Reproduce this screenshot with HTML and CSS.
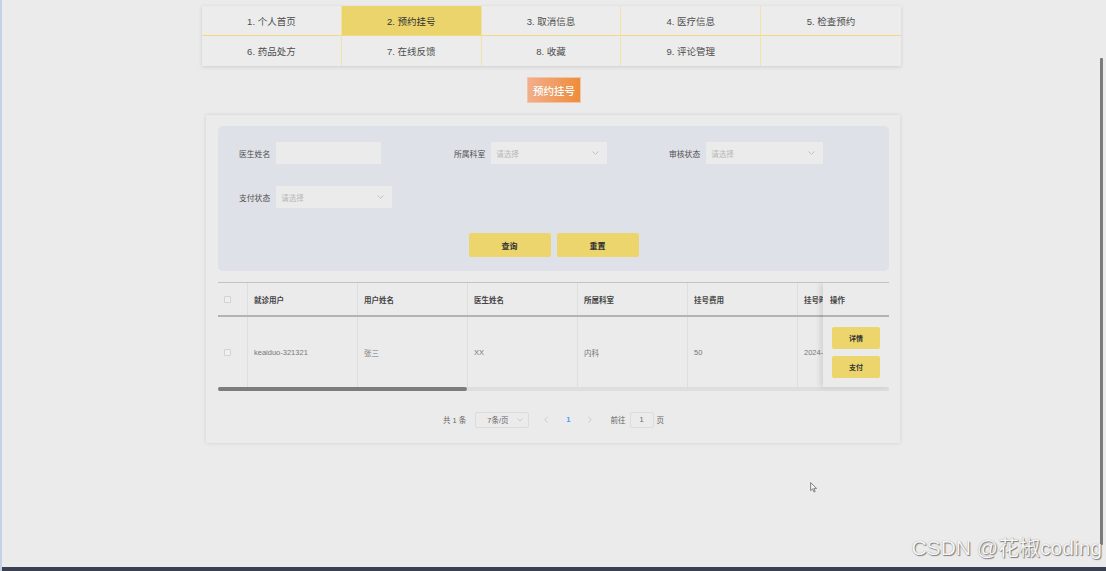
FILE: index.html
```html
<!DOCTYPE html>
<html lang="zh-CN">
<head>
<meta charset="utf-8">
<title>预约挂号</title>
<link rel="stylesheet" href="styles.css">
</head>
<body>
<div class="screen">
  <div class="content">
    <div class="page">
      <nav class="tabs">
        <div class="tab">1. 个人首页</div>
        <div class="tab active">2. 预约挂号</div>
        <div class="tab">3. 取消信息</div>
        <div class="tab">4. 医疗信息</div>
        <div class="tab">5. 检查预约</div>
        <div class="tab">6. 药品处方</div>
        <div class="tab">7. 在线反馈</div>
        <div class="tab">8. 收藏</div>
        <div class="tab">9. 评论管理</div>
        <div class="tab"></div>
      </nav>

      <div class="title-wrap"><div class="title">预约挂号</div></div>

      <section class="panel">
        <div class="search">
          <div class="fields">
            <div class="field"><label>医生姓名</label><div class="input"></div></div>
            <div class="field"><label>所属科室</label>
              <div class="input select"><span>请选择</span>
                <svg class="chev" width="7" height="4" viewBox="0 0 7 4"><path d="M0.5 0.5 L3.5 3.3 L6.5 0.5" fill="none" stroke="#b8b8b8" stroke-width="0.8"/></svg>
              </div>
            </div>
            <div class="field"><label>审核状态</label>
              <div class="input select w117"><span>请选择</span>
                <svg class="chev" width="7" height="4" viewBox="0 0 7 4"><path d="M0.5 0.5 L3.5 3.3 L6.5 0.5" fill="none" stroke="#b8b8b8" stroke-width="0.8"/></svg>
              </div>
            </div>
            <div class="field"><label>支付状态</label>
              <div class="input select"><span>请选择</span>
                <svg class="chev" width="7" height="4" viewBox="0 0 7 4"><path d="M0.5 0.5 L3.5 3.3 L6.5 0.5" fill="none" stroke="#b8b8b8" stroke-width="0.8"/></svg>
              </div>
            </div>
          </div>
          <div class="actions">
            <button class="btn">查询</button>
            <button class="btn">重置</button>
          </div>
        </div>

        <div class="table-wrap">
          <div class="trow thead">
            <div class="cell chk"><span class="box"></span></div>
            <div class="cell">就诊用户</div>
            <div class="cell">用户姓名</div>
            <div class="cell">医生姓名</div>
            <div class="cell">所属科室</div>
            <div class="cell">挂号费用</div>
            <div class="cell cut">挂号时间</div>
            <div class="fixed-head">操作</div>
          </div>
          <div class="trow tbody">
            <div class="cell chk"><span class="box"></span></div>
            <div class="cell">keaiduo-321321</div>
            <div class="cell">张三</div>
            <div class="cell">XX</div>
            <div class="cell">内科</div>
            <div class="cell">50</div>
            <div class="cell cut">2024-03-12</div>
            <div class="fixed-body">
              <button class="sbtn">详情</button>
              <button class="sbtn">支付</button>
            </div>
          </div>
          <div class="hscroll"><div class="thumb"></div></div>
          <div class="fixed-shadow"></div>
        </div>

        <div class="pager">
          <span>共 1 条</span>
          <div class="psize"><span>7条/页</span>
            <svg width="6" height="4" viewBox="0 0 6 4"><path d="M0.5 0.5 L3 3 L5.5 0.5" fill="none" stroke="#c0c0c0" stroke-width="0.8"/></svg>
          </div>
          <svg class="prev" width="4" height="7" viewBox="0 0 4 7"><path d="M3.5 0.5 L0.8 3.5 L3.5 6.5" fill="none" stroke="#c4c4c4" stroke-width="0.8"/></svg>
          <span class="num">1</span>
          <svg class="next" width="4" height="7" viewBox="0 0 4 7"><path d="M0.5 0.5 L3.2 3.5 L0.5 6.5" fill="none" stroke="#c4c4c4" stroke-width="0.8"/></svg>
          <span class="goto">前往</span>
          <div class="pinput">1</div>
          <span class="ye">页</span>
        </div>
      </section>
    </div>
  </div>
  <div class="bottom-bar"></div>
  <div class="vscroll"></div>
  <div class="watermark">CSDN @花椒coding</div>
  <svg class="cursor" width="8" height="11" viewBox="0 0 8 11"><path d="M0.6 0.6 L0.6 8.6 L2.6 6.8 L4 10 L5.2 9.5 L3.9 6.4 L6.6 6.4 Z" fill="#f4f4f4" stroke="#666" stroke-width="0.8" stroke-linejoin="round"/></svg>
</div>
</body>
</html>
```
FILE: styles.css
```css
* { box-sizing: border-box; }
html, body { margin: 0; padding: 0; }
body {
  background: #ebebeb;
  font-family: "Liberation Sans", "Noto Sans CJK SC", sans-serif;
  color: #555;
}
.screen {
  position: relative;
  width: 1106px;
  height: 571px;
  overflow: hidden;
  border-left: 2px solid #c6d1e6;
  display: flex;
  flex-direction: column;
}
.content { flex: 1; }
.page { width: 699px; margin-left: 200px; padding-top: 6px; }

/* tabs */
.tabs {
  display: grid;
  grid-template-columns: repeat(5, 1fr);
  background: #ececec;
  box-shadow: 0 1px 4px rgba(0,0,0,0.13);
}
.tab {
  height: 30px;
  display: flex;
  align-items: center;
  justify-content: center;
  font-size: 9.5px;
  color: #4d4d4d;
  border-right: 1px solid #f0e3a8;
}
.tab:nth-child(5n) { border-right: none; }
.tab:nth-child(-n+5) { border-bottom: 1px solid #efda80; }
.tab.active { background: #ebd46c; color: #333; }

/* title */
.title-wrap { display: flex; justify-content: center; padding-left: 5px; margin-top: 11px; }
.title {
  width: 54px;
  height: 26px;
  background: linear-gradient(90deg, #f2ae8c, #ee8d3a);
  color: #fff;
  font-size: 10.5px;
  font-weight: 500;
  display: flex;
  align-items: center;
  justify-content: center;
  border: 1px solid #f3c4a6;
}

/* panel */
.panel {
  margin: 12px 0 0 4px;
  width: 694px;
  padding: 11px 11px 0 12px;
  background: #ebebeb;
  box-shadow: 0 0 4px rgba(0,0,0,0.12);
}
.search {
  background: #dfe1e8;
  border-radius: 5px;
  padding: 16px 0 14px 21px;
}
.fields {
  display: grid;
  grid-template-columns: repeat(3, 215px);
  row-gap: 22px;
}
.field { display: flex; align-items: center; }
.field label { font-size: 7.8px; color: #4d4d4d; margin-right: 6px; }
.input { height: 22px; width: 105px; background: #ebebeb; }
.select {
  width: 116px;
  display: flex;
  align-items: center;
  justify-content: space-between;
  padding: 0 8px 0 5px;
  font-size: 7.5px;
  color: #b8b8b8;
}
.select.w117 { width: 117px; }
.actions {
  display: flex;
  justify-content: center;
  gap: 6px;
  margin-top: 25px;
  padding-right: 21px;
}
.btn {
  width: 82px;
  height: 24px;
  border: none;
  border-radius: 2px;
  background: #ebd56c;
  color: #333;
  font-family: inherit;
  font-size: 8px;
  font-weight: bold;
  padding: 0;
}

/* table */
.table-wrap {
  position: relative;
  margin-top: 11px;
  border-top: 1px solid #c2c2c2;
  overflow: hidden;
}
.trow { display: flex; width: 671px; }
.thead { height: 34px; border-bottom: 2px solid #b3b3b3; }
.tbody { height: 70px; }
.cell {
  flex: none;
  width: 110px;
  padding: 0 6px;
  display: flex;
  align-items: center;
  border-right: 1px solid #dedede;
  font-size: 7.5px;
  white-space: nowrap;
  overflow: hidden;
  color: #777;
}
.thead .cell { font-weight: bold; color: #444; }
.cell.chk { width: 30px; }
.cell.cut { width: 25px; padding-right: 0; border-right: none; }
.box {
  display: block;
  width: 7px;
  height: 7px;
  border: 1px solid #d2d2d2;
  background: #efefef;
  border-radius: 1px;
}
.hscroll { height: 4px; background: #dedede; }
.thumb { width: 249px; height: 4px; background: #7c7c7c; border-radius: 2px; }
.fixed-head {
  flex: none;
  width: 66px;
  display: flex;
  align-items: center;
  padding-left: 7px;
  font-size: 7.5px;
  font-weight: bold;
  color: #444;
}
.fixed-body {
  flex: none;
  width: 66px;
  display: flex;
  flex-direction: column;
  justify-content: center;
  gap: 7px;
  padding-left: 9px;
}
.fixed-shadow {
  position: absolute;
  top: 0;
  right: 0;
  width: 66px;
  height: 104px;
  box-shadow: -3px 0 5px rgba(0,0,0,0.1);
  pointer-events: none;
}
.sbtn {
  width: 48px;
  height: 22px;
  border: none;
  border-radius: 2px;
  background: #ebd56c;
  color: #333;
  font-family: inherit;
  font-size: 7px;
  font-weight: bold;
  padding: 0;
}

/* pager */
.pager {
  display: flex;
  align-items: center;
  justify-content: center;
  height: 17px;
  margin: 20px 0 0;
  padding-bottom: 15px;
  box-sizing: content-box;
  font-size: 7.5px;
  color: #666;
}
.psize {
  width: 54px;
  height: 16px;
  margin-left: 9px;
  border: 1px solid #dcdcdc;
  border-radius: 2px;
  display: flex;
  align-items: center;
  justify-content: space-between;
  padding: 0 5px 0 11px;
}
.prev { margin-left: 15px; }
.num { margin-left: 18px; color: #409eff; font-weight: bold; }
.next { margin-left: 17px; }
.goto { margin-left: 19px; }
.pinput {
  width: 24px;
  height: 16px;
  margin-left: 4px;
  border: 1px solid #dcdcdc;
  border-radius: 2px;
  display: flex;
  align-items: center;
  justify-content: center;
}
.ye { margin-left: 3px; }

/* chrome */
.bottom-bar { height: 4px; background: #39404f; }
.vscroll {
  position: absolute;
  right: 3px;
  top: 58px;
  width: 3px;
  height: 487px;
  background: #7b7b7b;
  border-radius: 1px;
}
.watermark {
  position: absolute;
  right: 4px;
  top: 536px;
  font-size: 21px;
  line-height: 24px;
  color: #f6f6f6;
  text-shadow: 1px 1px 1px rgba(0,0,0,0.45), 0 0 1px rgba(0,0,0,0.35);
  white-space: nowrap;
}
.cursor { position: absolute; left: 808px; top: 482px; }
```
